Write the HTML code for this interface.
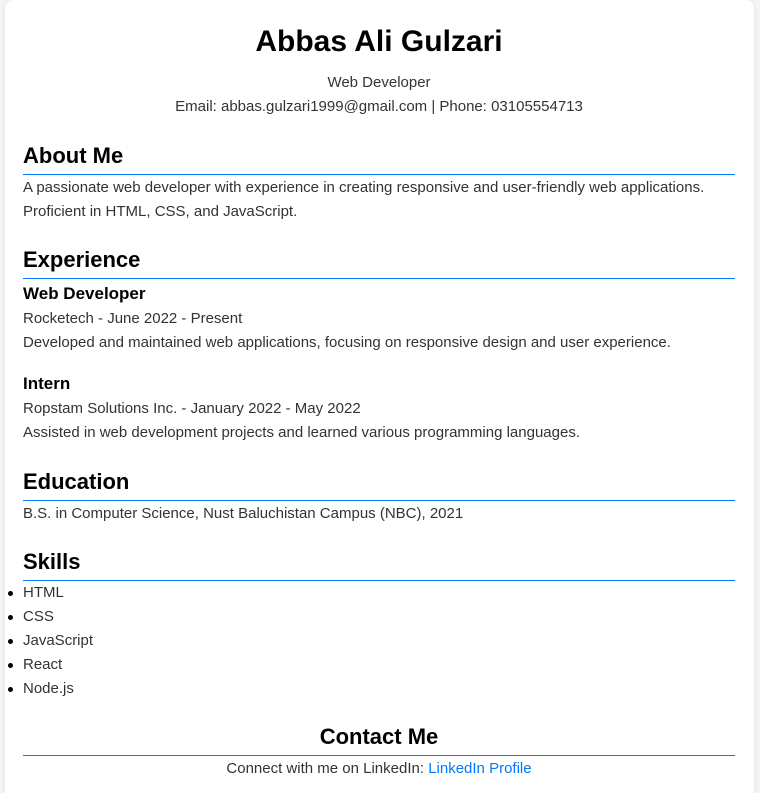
<!DOCTYPE html>
<html><head><meta charset="utf-8"><style>
body{margin:0;background:#f4f4f4;font-family:"Liberation Sans",Arial,sans-serif;width:760px;height:793px;overflow:hidden;position:relative}
.c{position:absolute;left:5px;top:0;width:749px;height:793px;background:#fff;border-radius:8px 8px 0 0;box-shadow:0 0 6px rgba(0,0,0,0.08)}
.t{position:absolute;left:23px;white-space:nowrap;font-size:15px;line-height:24px;color:#333}
.ctr{left:23px;width:712px;text-align:center}
.h{font-size:22px;font-weight:bold;color:#000;line-height:28px}
.h3{font-size:17px;font-weight:bold;color:#000}
.ln{position:absolute;left:23px;width:712px;height:1px;background:#007bff}
.b{position:absolute;left:8px;width:5px;height:5px;border-radius:50%;background:#000}
a{color:#007bff;text-decoration:none}
</style></head><body>
<div class="c"></div>
<div class="t ctr" style="top:23px;font-size:30px;line-height:38px;font-weight:bold;color:#000">Abbas Ali Gulzari</div>
<div class="t ctr" style="top:71px">Web Developer</div>
<div class="t ctr" style="top:95px">Email: abbas.gulzari1999@gmail.com | Phone: 03105554713</div>

<div class="t h" style="top:142px">About Me</div><div class="ln" style="top:174px"></div>
<div class="t" style="top:176px">A passionate web developer with experience in creating responsive and user-friendly web applications.</div>
<div class="t" style="top:200px">Proficient in HTML, CSS, and JavaScript.</div>

<div class="t h" style="top:246px">Experience</div><div class="ln" style="top:278px"></div>
<div class="t h3" style="top:282px">Web Developer</div>
<div class="t" style="top:307px">Rocketech - June 2022 - Present</div>
<div class="t" style="top:331px">Developed and maintained web applications, focusing on responsive design and user experience.</div>
<div class="t h3" style="top:372px">Intern</div>
<div class="t" style="top:397px">Ropstam Solutions Inc. - January 2022 - May 2022</div>
<div class="t" style="top:421px">Assisted in web development projects and learned various programming languages.</div>

<div class="t h" style="top:468px">Education</div><div class="ln" style="top:500px"></div>
<div class="t" style="top:502px">B.S. in Computer Science, Nust Baluchistan Campus (NBC), 2021</div>

<div class="t h" style="top:548px">Skills</div><div class="ln" style="top:580px"></div>
<div class="t" style="top:581px">HTML</div><div class="b" style="top:591px"></div>
<div class="t" style="top:605px">CSS</div><div class="b" style="top:615px"></div>
<div class="t" style="top:629px">JavaScript</div><div class="b" style="top:639px"></div>
<div class="t" style="top:653px">React</div><div class="b" style="top:663px"></div>
<div class="t" style="top:677px">Node.js</div><div class="b" style="top:687px"></div>

<div class="t h ctr" style="top:723px">Contact Me</div><div class="ln" style="top:755px"></div>
<div class="t ctr" style="top:757px">Connect with me on LinkedIn: <a>LinkedIn Profile</a></div>
</body></html>
